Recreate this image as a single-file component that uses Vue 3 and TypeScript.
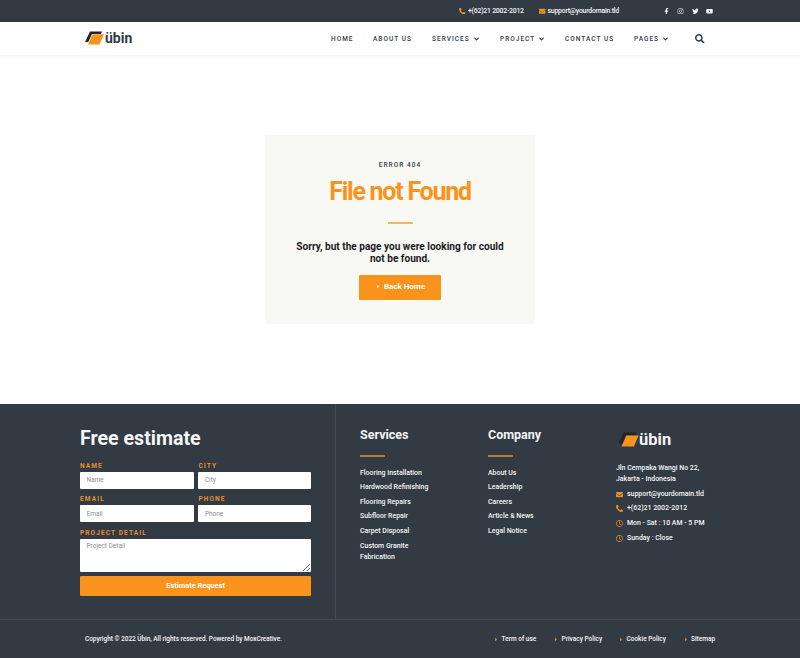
<script setup lang="ts">
import { h, type FunctionalComponent } from 'vue'

const shapes: Record<string, [string, string]> = {
  phone: ['0 0 512 512', 'M18.600 24.600l104-24c11.300-2.600 22.900 3.300 27.500 13.900l48 112c4.200 9.800 1.400 21.300-6.900 28l-60.600 49.600c36 76.700 98.900 140.500 177.200 177.200l49.600-60.600c6.800-8.300 18.200-11.100 28-6.900l112 48c10.700 4.700 16.600 16.300 14 27.600l-24 104C484.900 504.200 475.300 512 464 512 207.900 512 0 304.500 0 48c0-11.200 7.700-20.900 18.600-23.400z'],
  mail: ['0 0 512 512', 'M502.300 190.800c3.900-3.100 9.700-.2 9.700 4.700V400c0 26.500-21.500 48-48 48H48c-26.500 0-48-21.500-48-48V195.600c0-5 5.700-7.800 9.700-4.700 22.400 17.400 52.100 39.500 154.100 113.600 21.100 15.400 56.700 47.800 92.200 47.600 35.700.3 72-32.800 92.300-47.600 102-74.100 131.600-96.300 154-113.700zM256 320c23.200.4 56.600-29.200 73.400-41.400 132.700-96.300 142.800-104.700 173.400-128.700 5.800-4.500 9.200-11.500 9.200-18.900v-19c0-26.500-21.500-48-48-48H48c-26.500 0-48 21.500-48 48v19c0 7.400 3.400 14.300 9.200 18.900 30.600 23.900 40.700 32.400 173.400 128.700 16.800 12.200 50.200 41.800 73.400 41.400z'],
  clock: ['0 0 512 512', 'M256 8C119 8 8 119 8 256s111 248 248 248 248-111 248-248S393 8 256 8zm0 448c-110.500 0-200-89.500-200-200S145.500 56 256 56s200 89.500 200 200-89.500 200-200 200zm61.800-104.400l-84.900-61.700c-3.100-2.300-4.900-5.900-4.900-9.700V116c0-6.600 5.400-12 12-12h32c6.600 0 12 5.400 12 12v141.700l66.800 48.600c5.400 3.900 6.500 11.400 2.600 16.800L334.600 349c-3.900 5.300-11.400 6.500-16.800 2.600z'],
  facebook: ['0 0 320 512', 'M279.140 288l14.220-92.660h-88.910v-60.130c0-25.350 12.420-50.060 52.240-50.060h40.420V6.260S260.430 0 225.360 0c-73.220 0-121.080 44.380-121.080 124.720v70.620H22.890V288h81.390v224h100.170V288z'],
  instagram: ['0 0 448 512', 'M224.100 141c-63.600 0-114.900 51.300-114.900 114.900s51.300 114.900 114.900 114.900S339 319.500 339 255.900 287.700 141 224.100 141zm0 189.600c-41.100 0-74.700-33.500-74.700-74.700s33.500-74.700 74.700-74.700 74.700 33.500 74.700 74.700-33.600 74.700-74.700 74.700zm146.400-194.300c0 14.900-12 26.800-26.800 26.800-14.900 0-26.800-12-26.800-26.800s12-26.800 26.800-26.800 26.800 12 26.800 26.800zm76.100 27.200c-1.700-35.900-9.900-67.700-36.200-93.900-26.200-26.200-58-34.400-93.900-36.200-37-2.100-147.900-2.100-184.900 0-35.800 1.700-67.600 9.900-93.900 36.100s-34.400 58-36.200 93.900c-2.100 37-2.100 147.900 0 184.900 1.700 35.900 9.900 67.700 36.200 93.900s58 34.400 93.900 36.200c37 2.100 147.900 2.100 184.900 0 35.900-1.700 67.700-9.900 93.900-36.200 26.200-26.200 34.400-58 36.200-93.900 2.100-37 2.100-147.800 0-184.800zM398.800 388c-7.800 19.600-22.900 34.700-42.600 42.600-29.500 11.700-99.500 9-132.100 9s-102.700 2.600-132.100-9c-19.600-7.800-34.700-22.900-42.600-42.600-11.700-29.500-9-99.500-9-132.100s-2.600-102.700 9-132.100c7.800-19.600 22.900-34.700 42.600-42.600 29.500-11.700 99.500-9 132.100-9s102.700-2.600 132.100 9c19.600 7.800 34.700 22.900 42.600 42.600 11.700 29.500 9 99.500 9 132.100s2.700 102.700-9 132.100z'],
  twitter: ['0 0 512 512', 'M459.370 151.716c.325 4.548.325 9.097.325 13.645 0 138.720-105.583 298.558-298.558 298.558-59.452 0-114.680-17.219-161.137-47.106 8.447.974 16.568 1.299 25.340 1.299 49.055 0 94.213-16.568 130.274-44.832-46.132-.975-84.792-31.188-98.112-72.772 6.498.974 12.995 1.624 19.818 1.624 9.421 0 18.843-1.300 27.614-3.573-48.081-9.747-84.143-51.980-84.143-102.985v-1.299c13.969 7.797 30.214 12.670 47.431 13.319-28.264-18.843-46.781-51.005-46.781-87.391 0-19.492 5.197-37.360 14.294-52.954 51.655 63.675 129.300 105.258 216.365 109.807-1.624-7.797-2.599-15.918-2.599-24.040 0-57.828 46.782-104.934 104.934-104.934 30.213 0 57.502 12.670 76.670 33.137 23.715-4.548 46.456-13.320 66.599-25.340-7.798 24.366-24.366 44.833-46.132 57.827 21.117-2.273 41.584-8.122 60.426-16.243-14.292 20.791-32.161 39.308-52.628 54.253z'],
  youtube: ['0 0 576 512', 'M549.655 124.083c-6.281-23.650-24.787-42.276-48.284-48.597C458.781 64 288 64 288 64S117.220 64 74.629 75.486c-23.497 6.322-42.003 24.947-48.284 48.597-11.412 42.867-11.412 132.305-11.412 132.305s0 89.438 11.412 132.305c6.281 23.650 24.787 41.500 48.284 47.821C117.220 448 288 448 288 448s170.780 0 213.371-11.486c23.497-6.321 42.003-24.171 48.284-47.821 11.412-42.867 11.412-132.305 11.412-132.305s0-89.438-11.412-132.305zM232.145 337.591V175.185l142.739 81.205z'],
  search: ['0 0 512 512', 'M505 442.700L405.300 343c-4.500-4.500-10.600-7-17-7H372c27.600-35.300 44-79.700 44-128C416 93.100 322.900 0 208 0S0 93.100 0 208s93.100 208 208 208c48.300 0 92.700-16.400 128-44v16.300c0 6.400 2.500 12.500 7 17l99.700 99.700c9.400 9.400 24.600 9.400 33.900 0l28.300-28.300c9.400-9.400 9.400-24.600.1-34zM208 336c-70.700 0-128-57.200-128-128 0-70.700 57.200-128 128-128 70.700 0 128 57.200 128 128 0 70.700-57.200 128-128 128z'],
  chevron: ['0 0 448 320', 'M207 285L13 91c-9-9-9-25 0-34l22-22c9-9 25-9 34 0l155 133L379 35c9-9 25-9 34 0l22 22c9 9 9 25 0 34L241 285c-9 9-25 9-34 0z'],
  caret: ['0 0 192 320', 'M0 285V35C0 7 34-7 54 13l125 125c12 12 12 32 0 44L54 307c-20 20-54 6-54-22z'],
}

const Icon: FunctionalComponent<{ name: string }> = ({ name }) =>
  h('svg', { viewBox: shapes[name][0], fill: 'currentColor', 'aria-hidden': 'true' }, [h('path', { d: shapes[name][1] })])
Icon.props = ['name']

const nav = [
  { label: 'HOME', w: 42, menu: false },
  { label: 'ABOUT US', w: 59, menu: false },
  { label: 'SERVICES', w: 68, menu: true },
  { label: 'PROJECT', w: 65, menu: true },
  { label: 'CONTACT US', w: 69, menu: false },
  { label: 'PAGES', w: 61, menu: true },
]
const social = ['facebook', 'instagram', 'twitter', 'youtube']
const fields = ['Name', 'City', 'Email', 'Phone']
const columns = [
  { title: 'Services', links: ['Flooring Installation', 'Hardwood Refinishing', 'Flooring Repairs', 'Subfloor Repair', 'Carpet Disposal', 'Custom Granite Fabrication'] },
  { title: 'Company', links: ['About Us', 'Leadership', 'Careers', 'Article & News', 'Legal Notice'] },
]
const contacts = [
  { icon: 'mail', text: 'support@yourdomain.tld' },
  { icon: 'phone', text: '+(62)21 2002-2012' },
  { icon: 'clock', text: 'Mon - Sat : 10 AM - 5 PM' },
  { icon: 'clock', text: 'Sunday : Close' },
]
const legal = [
  { label: 'Term of use', w: 60 },
  { label: 'Privacy Policy', w: 65 },
  { label: 'Cookie Policy', w: 64.5 },
  { label: 'Sitemap', w: 34 },
]
</script>

<template>
  <div class="page">
    <div class="topbar">
      <span class="top-item top-phone"><Icon name="phone" />+(62)21 2002-2012</span>
      <span class="top-item top-mail"><Icon name="mail" />support@yourdomain.tld</span>
      <span class="social"><Icon v-for="s in social" :key="s" :name="s" /></span>
    </div>
    <header class="header">
      <div class="logo">
        <svg class="mark" viewBox="0 0 19 14" aria-hidden="true"><path d="M5 .5h12l-1 2.500H7L3.300 11H0z" fill="#20262b" /><path d="M7.500 3.200H19L14.500 13.500H3z" fill="#f9931c" /></svg>
        <span>übin</span>
      </div>
      <nav class="nav">
        <a v-for="n in nav" :key="n.label" :style="{ width: n.w + 'px' }">{{ n.label }}<Icon v-if="n.menu" name="chevron" /></a>
      </nav>
      <Icon name="search" class="search" />
    </header>

    <main class="main">
      <section class="card">
        <p class="code">ERROR 404</p>
        <h1>File not Found</h1>
        <i class="rule"></i>
        <h2>Sorry, but the page you were looking for could not be found.</h2>
        <a class="back"><Icon name="caret" /><span>Back Home</span></a>
      </section>
    </main>

    <footer class="footer">
      <div class="upper">
        <section class="estimate">
          <h3>Free estimate</h3>
          <form class="form" @submit.prevent>
            <label v-for="f in fields" :key="f">{{ f.toUpperCase() }}<input type="text" :placeholder="f" /></label>
            <label class="wide">PROJECT DETAIL<textarea placeholder="Project Detail"></textarea></label>
            <button class="wide">Estimate Request</button>
          </form>
        </section>
        <div class="info">
          <section v-for="c in columns" :key="c.title" class="column">
            <h4>{{ c.title }}</h4>
            <i class="rule"></i>
            <ul><li v-for="l in c.links" :key="l">{{ l }}</li></ul>
          </section>
          <section class="contact">
            <div class="logo logo-light">
              <svg class="mark" viewBox="0 0 19 14" aria-hidden="true"><path d="M5 .5h12l-1 2.500H7L3.300 11H0z" fill="#20262b" /><path d="M7.500 3.200H19L14.500 13.500H3z" fill="#f9931c" /></svg>
              <span>übin</span>
            </div>
            <p>Jln Cempaka Wangi No 22,<br />Jakarta - Indonesia</p>
            <ul><li v-for="c in contacts" :key="c.text"><Icon :name="c.icon" />{{ c.text }}</li></ul>
          </section>
        </div>
      </div>
      <div class="lower">
        <span class="copyright">Copyright © 2022 Übin, All rights reserved. Powered by MoxCreative.</span>
        <div class="legal"><a v-for="l in legal" :key="l.label" :style="{ width: l.w + 'px' }"><Icon name="caret" />{{ l.label }}</a></div>
      </div>
    </footer>
  </div>
</template>

<style>
body { margin: 0; }
</style>
<style scoped>
* { box-sizing: border-box; }
h1, h2, h3, h4, p, ul { margin: 0; padding: 0; list-style: none; }
svg { flex: none; display: block; }
.page { width: 800px; height: 658px; display: flex; flex-direction: column; overflow: hidden; font-family: Roboto, "Liberation Sans", sans-serif; font-size: 6.950px; font-weight: 500; color: #323a43; background: #fefefe; }
.topbar { height: 22px; background: #323a43; color: #f4f5f6; display: flex; align-items: center; padding-left: 459px; font-size: 6.880px; letter-spacing: -.22px; }
.top-item { display: flex; align-items: center; white-space: nowrap; }
.top-item svg { width: 6.500px; height: 6.500px; color: #f9931c; margin-right: 2.500px; }
.top-phone { width: 80px; }
.top-mail { width: 123.500px; }
.top-mail svg { margin-right: 2px; }
.social { display: flex; gap: 7.500px; }
.social svg { width: 7px; height: 6.500px; }
.header { height: 33px; background: #fff; box-shadow: 0 0 6px rgba(0, 0, 0, .06); display: flex; align-items: center; padding-left: 85px; }
.logo { display: flex; align-items: center; font-size: 14px; font-weight: 700; line-height: 16px; }
.header .logo { width: 246px; margin-top: -1px; }
.logo .mark { width: 19px; height: 14px; margin-right: 1px; }
.nav { display: flex; width: 364px; font-size: 6.500px; letter-spacing: 1.020px; }
.nav a { display: flex; align-items: center; flex: none; white-space: nowrap; }
.nav svg { width: 5px; height: 4px; margin-left: 4px; }
.search { width: 9.500px; height: 9.500px; }
.main { height: 349px; display: flex; justify-content: center; align-items: flex-start; padding-top: 80px; }
.card { width: 270px; height: 189px; border-radius: 2px; background: #f8f8f5; display: flex; flex-direction: column; align-items: center; padding-top: 25px; text-align: center; }
.code { font-size: 6.500px; line-height: 10px; letter-spacing: 1.050px; }
h1 { color: #f9931c; font-size: 25px; line-height: 30px; letter-spacing: -1.250px; font-weight: 700; margin-top: 7px; }
.rule { display: block; width: 25px; height: 2px; }
.card .rule { margin-top: 15px; background: #f5b466; }
h2 { width: 220px; color: #1c1c1f; font-size: 10.080px; line-height: 12px; font-weight: 700; margin-top: 17px; }
.back { width: 82px; height: 25px; margin-top: 10px; padding: 0 0 2px 2px; border-radius: 1px; background: #f9931c; color: #fff; display: flex; align-items: center; justify-content: center; font-size: 8px; font-weight: 700; }
.back svg { width: 2px; height: 3px; margin-right: 5px; }
.footer { height: 254px; background: #323a43; color: #f5f6f7; }
.upper { height: 216px; display: flex; border-bottom: 1px solid #424b54; }
.estimate { width: 336px; border-right: 1px solid #424b54; padding: 23px 23px 0 80px; }
h3 { font-size: 19.600px; line-height: 23px; font-weight: 700; }
.form { display: grid; grid-template-columns: 113.500px 113px; column-gap: 4.900px; row-gap: 5.500px; margin-top: 10.500px; }
label { display: flex; flex-direction: column; color: #e78e2b; font-size: 6.500px; line-height: 10.500px; letter-spacing: 1.120px; font-weight: 700; }
input, textarea { display: block; width: 100%; border: 0; border-radius: 1px; background: #fff; margin: 0; padding: 0 6.500px; font: 400 6.500px/11px Roboto, sans-serif; letter-spacing: 0; height: 17px; margin-top: .5px; }
textarea { height: 33px; padding-top: 2px; resize: vertical; }
input::placeholder, textarea::placeholder { color: #8d8e91; opacity: 1; }
.wide { grid-column: 1 / 3; }
button { height: 20.500px; border: 0; border-radius: 1px; background: #f9931c; color: #fff; font: 700 7.450px Roboto, sans-serif; padding: 0; margin-top: -1.500px; }
.info { display: flex; padding: 23px 0 0 24px; }
.column { width: 128px; }
h4 { font-size: 12.500px; line-height: 16px; font-weight: 700; }
.column .rule { margin-top: 12px; background: #b77b38; }
.column ul { margin-top: 10.500px; display: flex; flex-direction: column; gap: 3px; }
.column li { width: 72px; line-height: 11.650px; }
.contact { padding-top: 3px; white-space: nowrap; }
.logo-light { font-size: 16.500px; line-height: 19px; padding-left: 2px; }
.logo-light .mark { width: 21px; height: 15px; margin-right: 0; }
.contact p { line-height: 11px; margin-top: 13.500px; }
.contact ul { display: flex; flex-direction: column; gap: 3.700px; margin-top: 4px; }
.contact li { display: flex; align-items: center; line-height: 11px; }
.contact li svg { width: 7px; height: 7px; margin-right: 4px; color: #e98f2a; }
.lower { height: 38px; display: flex; align-items: center; padding-left: 85px; font-size: 6.500px; }
.copyright { width: 410px; letter-spacing: -.035px; }
.legal { display: flex; }
.legal a { display: flex; align-items: center; white-space: nowrap; flex: none; }
.legal svg { width: 2px; height: 3px; color: #e98f2a; margin-right: 4.500px; }
</style>
